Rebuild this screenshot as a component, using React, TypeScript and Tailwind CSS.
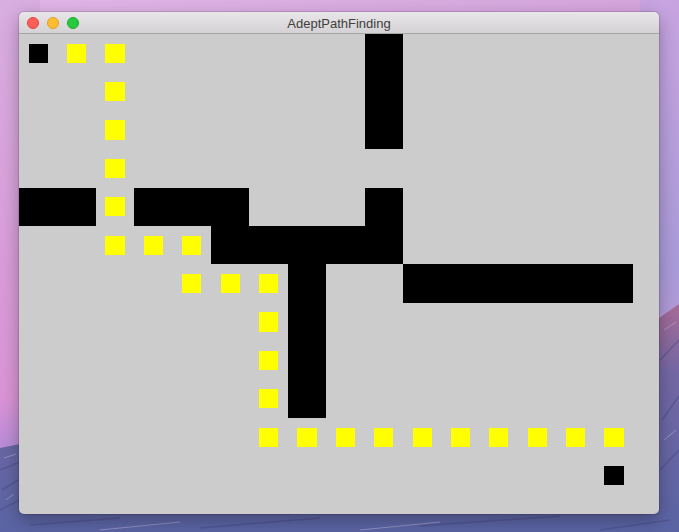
import React from "react";

// grid map: # wall, y path, s start/end, . empty
const MAP = [
  "syy......#.......",
  "..y......#.......",
  "..y......#.......",
  "..y..............",
  "##y###...#.......",
  "..yyy#####.......",
  "....yyy#..######.",
  "......y#.........",
  "......y#.........",
  "......y#.........",
  "......yyyyyyyyyy.",
  "...............s.",
  ".................",
];

function Cell({ kind }: { kind: string }) {
  if (kind === "#") return <div className="bg-black" />;
  if (kind === "y" || kind === "s") {
    return (
      <div className="flex items-center justify-center">
        <div className={`w-[19.2px] h-[19.2px] ${kind === "y" ? "bg-[#ffff00]" : "bg-black"}`} />
      </div>
    );
  }
  return <div />;
}

function Desktop() {
  return (
    <svg className="absolute inset-0" width="679" height="532" viewBox="0 0 679 532">
      <defs>
        <linearGradient id="sky" x1="0" y1="0" x2="1" y2="1">
          <stop offset="0" stopColor="#e2b6e8" />
          <stop offset="0.5" stopColor="#d4a4dc" />
          <stop offset="1" stopColor="#b39ad9" />
        </linearGradient>
        <linearGradient id="skyright" x1="0" y1="0" x2="0" y2="1">
          <stop offset="0" stopColor="#c8a4e0" />
          <stop offset="0.5" stopColor="#a99bd9" />
          <stop offset="1" stopColor="#d79ad6" />
        </linearGradient>
        <linearGradient id="skyleft" x1="0" y1="0" x2="0" y2="1">
          <stop offset="0" stopColor="#d8aee0" />
          <stop offset="0.75" stopColor="#da94d6" />
          <stop offset="0.85" stopColor="#b48ad8" />
        </linearGradient>
        <linearGradient id="mtn" x1="0" y1="0" x2="0" y2="1">
          <stop offset="0" stopColor="#a86c98" />
          <stop offset="0.3" stopColor="#7468a4" />
          <stop offset="1" stopColor="#5a64a4" />
        </linearGradient>
      </defs>
      <rect width="679" height="532" fill="url(#sky)" />
      <rect x="0" width="40" height="532" fill="url(#skyleft)" />
      <rect x="640" width="39" height="532" fill="url(#skyright)" />
      <polygon points="0,448 20,444 80,446 640,470 659,318 679,304 679,532 0,532" fill="url(#mtn)" />
      <path d="M0 470 L20 462 M2 490 L18 480 M0 510 L20 500 M660 360 L679 340 M662 420 L679 396 M660 470 L679 450 M30 525 L120 518 M200 528 L320 518 M420 526 L560 516 M600 530 L670 520" stroke="#474c86" strokeWidth="1.5" opacity="0.5" />
      <path d="M4 458 L16 454 M6 500 L14 494 M664 330 L676 322 M664 440 L676 430 M100 530 L180 522 M360 530 L440 522" stroke="#c2b8de" strokeWidth="1" opacity="0.5" />
    </svg>
  );
}

export default function App() {
  return (
    <div className="relative w-[679px] h-[532px] overflow-hidden">
      <Desktop />
      <div className="relative ml-[19px] pt-[12px]">
        <div className="w-[640px] rounded-[5px] overflow-hidden shadow-[0_0_0_1px_rgba(0,0,0,0.12),0_6px_18px_rgba(0,0,0,0.3)]">
          {/* title bar */}
          <div className="relative h-[22px] flex items-center justify-center bg-gradient-to-b from-[#e8e6e8] to-[#d4d2d4] border-b border-[#a5a5a5]">
            <div className="absolute left-[8px] top-[5px] flex gap-[8px]">
              <div className="w-[12px] h-[12px] rounded-full bg-[#fd5e57] border border-[#e0443e]" />
              <div className="w-[12px] h-[12px] rounded-full bg-[#febc2e] border border-[#dea123]" />
              <div className="w-[12px] h-[12px] rounded-full bg-[#28c840] border border-[#1aab29]" />
            </div>
            <span className="text-[13px] text-[#404040] leading-none pt-[1px] font-['Liberation_Sans',Arial,sans-serif]">
              AdeptPathFinding
            </span>
          </div>
          {/* board */}
          <div className="h-[480px] bg-[#cccccc] overflow-hidden">
            <div className="grid grid-cols-[repeat(17,38.4px)] grid-rows-[repeat(13,38.4px)]">
              {MAP.map((row, r) =>
                row.split("").map((k, c) => <Cell key={`${r}-${c}`} kind={k} />)
              )}
            </div>
          </div>
        </div>
      </div>
    </div>
  );
}
